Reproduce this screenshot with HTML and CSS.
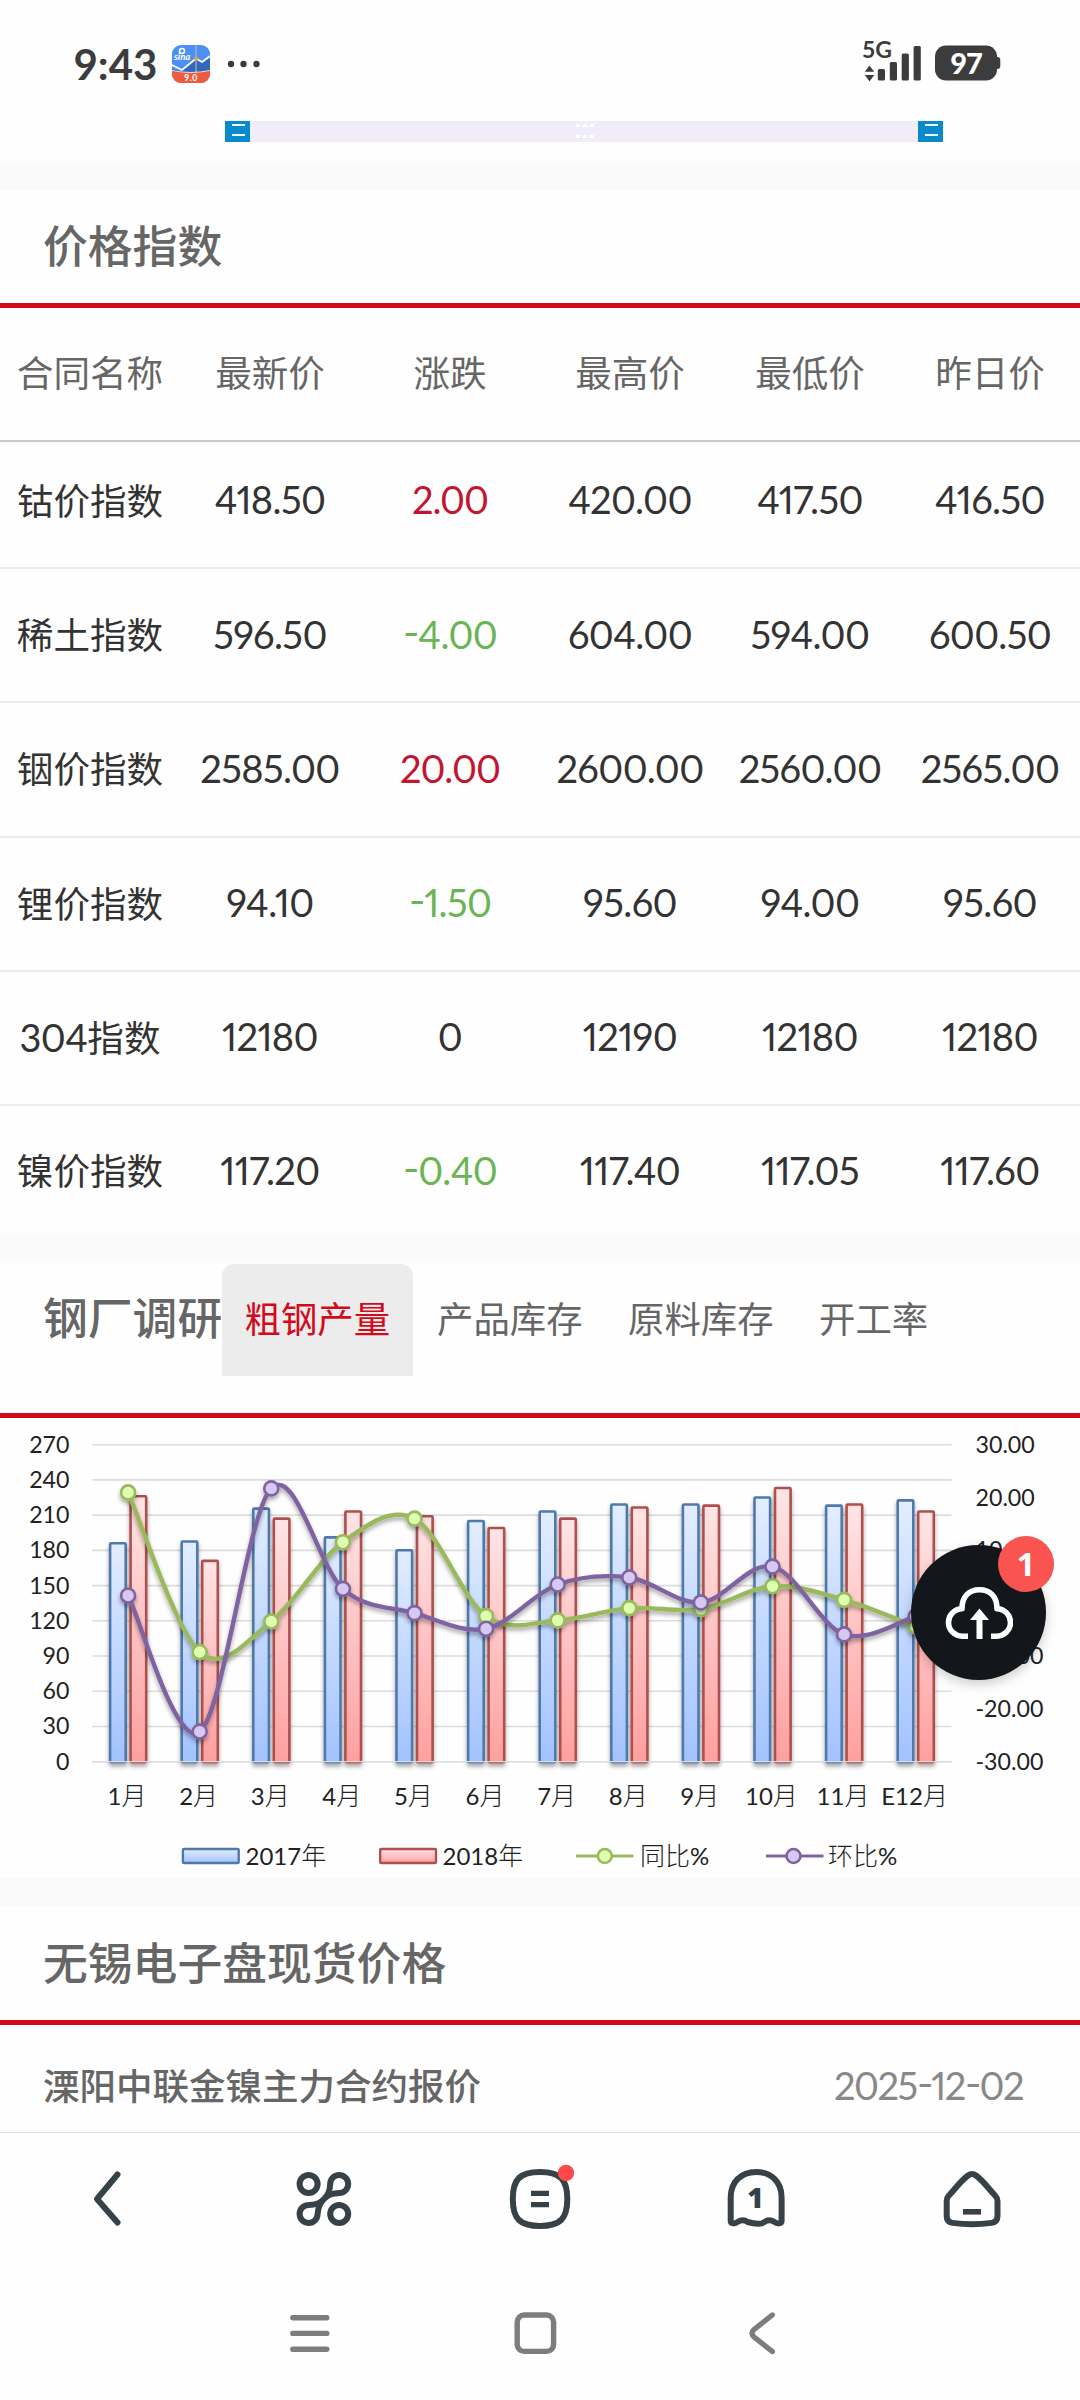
FILE: index.html
```html
<!DOCTYPE html>
<html lang="zh-CN">
<head>
<meta charset="utf-8">
<title>价格指数</title>
<link rel="stylesheet" href="styles.css">
</head>
<body>
<div class="screen">
  <header class="status">
    <span class="clock">9:43</span>
    <svg class="app-icon" width="38" height="38" viewBox="0 0 38 38">
      <defs><clipPath id="appClip"><rect width="38" height="38" rx="9"/></clipPath></defs>
      <g clip-path="url(#appClip)">
        <rect width="38" height="38" fill="#4d8ff5"/>
        <path d="M0 24L9 26L24 14L31 18L38 12V30H0z" fill="#3568bd"/>
        <path d="M0 20L10 25L24 13.500L30 17L38 11" fill="none" stroke="#fff" stroke-width="1.800"/>
        <path d="M24 0V28" stroke="#c9bfa6" stroke-width="1"/>
        <circle cx="24" cy="13.500" r="1.900" fill="#e0a14c"/>
        <path d="M0 26Q19 30 38 26V38H0z" fill="#ef5b3c"/>
        <path d="M0 25.500Q19 29.500 38 25.500" fill="none" stroke="#f7d9cf" stroke-width="1"/>
        <circle cx="10" cy="6" r="2.500" fill="none" stroke="#fff" stroke-width="1.500"/>
      </g>
      <text x="2" y="14.500" class="app-brand">sina</text>
      <text x="19" y="36" class="app-version">9.0</text>
    </svg>
    <svg class="more" width="34" height="8" viewBox="0 0 34 8"><g fill="#3c3c3c"><circle cx="4" cy="4" r="3.200"/><circle cx="16.500" cy="4" r="3.200"/><circle cx="29.500" cy="4" r="3.200"/></g></svg>
    <svg class="signal" width="140" height="66" viewBox="862 28 140 66">
      <text x="862" y="57.500" class="net">5G</text>
      <g fill="#3c3c3c">
        <path d="M869.500 65.500L874.200 71.800H864.800zM864.800 75H874.200L869.500 81.500z"/>
        <rect x="877.800" y="69" width="7.200" height="11.500" rx="1.500"/><rect x="889.800" y="62" width="7.200" height="18.500" rx="1.500"/><rect x="901.700" y="53.500" width="7.200" height="27" rx="1.500"/><rect x="913.600" y="46" width="7.200" height="34.500" rx="1.500"/>
        <rect x="935" y="45.500" width="62" height="35" rx="11"/><rect x="990" y="57" width="10.300" height="12" rx="3"/>
      </g>
      <text x="966" y="73.500" class="battery">97</text>
    </svg>
  </header>

  <div class="slider">
    <span class="handle"></span>
    <span class="track"><i></i><i></i><i></i><i></i><i></i><i></i></span>
    <span class="handle"></span>
  </div>

  <section class="card index">
    <h2 class="bar">价格指数</h2>
    <div class="table">
      <div class="tr th"><span>合同名称</span><span>最新价</span><span>涨跌</span><span>最高价</span><span>最低价</span><span>昨日价</span></div>
      <div class="tr first"><span>钴价指数</span><b>418.50</b><b class="up">2.00</b><b>420.00</b><b>417.50</b><b>416.50</b></div>
      <div class="tr"><span>稀土指数</span><b>596.50</b><b class="down"><u>-</u>4.00</b><b>604.00</b><b>594.00</b><b>600.50</b></div>
      <div class="tr"><span>铟价指数</span><b>2585.00</b><b class="up">20.00</b><b>2600.00</b><b>2560.00</b><b>2565.00</b></div>
      <div class="tr"><span>锂价指数</span><b>94.10</b><b class="down"><u>-</u>1.50</b><b>95.60</b><b>94.00</b><b>95.60</b></div>
      <div class="tr"><span><b>304</b>指数</span><b>12180</b><b>0</b><b>12190</b><b>12180</b><b>12180</b></div>
      <div class="tr last"><span>镍价指数</span><b>117.20</b><b class="down"><u>-</u>0.40</b><b>117.40</b><b>117.05</b><b>117.60</b></div>
    </div>
  </section>

  <section class="card survey">
    <div class="bar tabs">
      <h2>钢厂调研</h2>
      <span class="tab active">粗钢产量</span><span class="tab">产品库存</span><span class="tab">原料库存</span><span class="tab">开工率</span>
    </div>
    <svg id="chart" class="chart" width="1080" height="460" viewBox="0 1418 1080 460">
      <defs>
        <linearGradient id="blue" x1="0" y1="0" x2="0" y2="1"><stop offset="0" stop-color="#e2edff"/><stop offset="1" stop-color="#a2c2ff"/></linearGradient>
        <linearGradient id="red" x1="0" y1="0" x2="0" y2="1"><stop offset="0" stop-color="#ffe5e5"/><stop offset="1" stop-color="#ff9f9f"/></linearGradient>
        <filter id="shadow" x="-20%" y="-20%" width="140%" height="140%"><feDropShadow dx="0" dy="3" stdDeviation="2" flood-color="#000" flood-opacity=".35"/></filter>
      </defs>
    </svg>
    <div class="fab">
      <svg width="68" height="56" viewBox="944 1584 68 56">
        <path d="M967 1635.200H961.500A13.700 13.700 0 0 1 961 1607.700C961 1595.500 968 1588.700 978.500 1588.700S996 1595.500 996 1607.700A13.700 13.700 0 0 1 995.500 1635.200H990" fill="none" stroke="#fff" stroke-width="5.600" stroke-linejoin="round"/>
        <path d="M978.500 1607.500L988 1619H981.500V1638H975.500V1619H969z" fill="#fff"/>
      </svg>
      <span class="badge">1</span>
    </div>
  </section>

  <section class="card spot">
    <h2 class="bar">无锡电子盘现货价格</h2>
    <div class="news"><span>溧阳中联金镍主力合约报价</span><time>2025<u>-</u>12<u>-</u>02</time></div>
  </section>

  <nav class="tools">
    <span><svg width="70" height="70" viewBox="73 2164 70 70"><path d="M117.500 2174.500L97 2199L117.500 2222.500" class="ic"/></svg></span>
    <span><svg width="70" height="70" viewBox="289 2164 70 70"><g class="ic"><circle cx="308.600" cy="2184" r="9"/><circle cx="339.200" cy="2214" r="9"/><path d="M324 2199C329 2194 333 2193.300 339.500 2193A9 9 0 1 0 330.200 2184C329.800 2190 329 2194 324 2199C319 2204 315 2204.700 308.500 2205A9 9 0 1 0 317.600 2214C318 2208 319 2204 324 2199z"/></g></svg></span>
    <span><svg width="70" height="70" viewBox="505 2164 70 70"><path d="M540 2172C560 2172 567.300 2179 567.300 2199S560 2226 540 2226S512.800 2219 512.800 2199S520 2172 540 2172z" class="ic"/><path d="M531 2193.400H549M531 2204.600H549" fill="none" stroke="#374248" stroke-width="5.400"/><circle cx="566" cy="2173" r="8.200" fill="#ff4848"/></svg></span>
    <span><svg width="70" height="70" viewBox="721 2164 70 70"><path d="M730.700 2221V2197.500C730.700 2182 741 2172 756.100 2172S781.600 2182 781.600 2197.500V2221C781.600 2224 777 2224 774.500 2222Q769 2218.500 764.500 2222T747.500 2222Q743 2218.500 737.500 2222C735 2224 730.700 2224 730.700 2221z" class="ic"/><text x="755.500" y="2208" class="page-count">1</text></svg></span>
    <span><svg width="70" height="70" viewBox="937 2164 70 70"><path d="M946.700 2201Q946.700 2198 948.500 2196C957 2187 960 2181.500 968 2175.500Q972 2172.500 976 2175.500C984 2181.500 987 2187 995.500 2196Q997.500 2198 997.500 2201V2216Q997.500 2222 991.500 2222.900Q972 2225.500 952.500 2222.900Q946.700 2222 946.700 2216z" class="ic"/><path d="M963 2211.800H981" fill="none" stroke="#374248" stroke-width="5.600"/></svg></span>
  </nav>
  <footer class="sysnav">
    <svg width="44" height="48" viewBox="288 2309 44 48"><path d="M292.800 2317.700H326.800M292.800 2333.400H326.800M292.800 2349.200H326.800"/></svg>
    <svg width="48" height="48" viewBox="511 2309 48 48"><rect x="517.200" y="2315" width="36.400" height="36.400" rx="7"/></svg>
    <svg width="32" height="48" viewBox="746 2309 32 48"><path d="M772.300 2315L754 2329.500Q750 2333.300 754 2337L772.300 2351.500"/></svg>
  </footer>
</div>
<script src="chart.js"></script>
</body>
</html>
```
FILE: styles.css
```css
* { box-sizing: border-box; margin: 0; padding: 0; }
body {
  width: 1080px;
  background: #fefefe;
  font-family: Lato, "Noto Sans CJK SC", sans-serif;
  color: #333;
}
.screen { width: 1080px; height: 2400px; display: flex; flex-direction: column; overflow: hidden; }
svg { display: block; }
i, u { font-style: normal; text-decoration: none; }

.status { height: 121px; padding: 6px 78px 0 73.5px; display: flex; align-items: center; }
.clock { font: 700 42px/1 Lato, sans-serif; letter-spacing: 0; width: 98.5px; color: #3c3c3c; }
.more { margin-left: 17px; }
.signal { margin-left: auto; margin-top: -5px; }
.app-brand { font: italic 700 9.5px Lato, sans-serif; fill: #fff; }
.app-version { font: 700 8.5px Lato, sans-serif; letter-spacing: .6px; fill: #fff; text-anchor: middle; }
.net { font: 700 23px Lato, sans-serif; fill: #3c3c3c; }
.battery { font: 900 29px Lato, sans-serif; letter-spacing: -1px; fill: #fff; text-anchor: middle; }

.slider { height: 40px; padding-left: 225px; display: flex; }
.handle { width: 25px; height: 21px; background: #0a89cc; padding: 3px 5px 0 7px; }
.handle::before { content: ""; display: block; height: 8px; border: solid #e9fbff; border-width: 2px 0; }
.track { width: 668px; height: 21px; background: #f0ecf9; display: grid; grid-template-columns: repeat(3, 4px); gap: 8px 3px; justify-content: center; align-content: start; padding: 3px 0 0 2px; }
.track i { width: 4px; height: 3px; background: #fff; }

.card { position: relative; border-top: 29px solid #fafafa; }
h2, .bar { font-size: 44.8px; font-weight: 500; color: #666; }
.bar { border-bottom: 5px solid #d20a1a; padding-left: 43px; line-height: 113px; }
.index .bar { height: 118px; }

.tr { height: 134.25px; border-bottom: 2px solid #ececec; display: grid; grid-template-columns: repeat(6, 180px); align-items: center; text-align: center; font-size: 36.6px; padding-bottom: 3px; }
.tr.th { height: 134px; border-color: #c8c8c8; color: #666; padding-bottom: 5px; }
.tr.first { height: 127px; padding-bottom: 11px; }
.tr.last { height: 127px; border: 0; padding-bottom: 0; }
.tr b, time { font-weight: 400; font-size: 38px; letter-spacing: -.6px; font-feature-settings: "pnum"; }
.tr .up { color: #c4152f; letter-spacing: -1px; }
.tr .down { color: #6ab553; }
.tr u, time u { display: inline-block; transform: translateY(-3px) scaleX(1.2); margin: 0 1px; }

.tabs { height: 157px; display: flex; align-items: flex-start; padding-top: 3px; }
.tabs h2 { width: 179px; white-space: nowrap; line-height: 109px; }
.tab { width: 191px; height: 112px; padding-left: 24px; font-size: 36.4px; font-weight: 400; line-height: 111px; white-space: nowrap; }
.tab.active { background: #ececec; color: #d20a1a; border-radius: 12px 12px 0 0; padding-left: 22.5px; }

.chart text { font: 400 23.2px Lato, "Noto Sans CJK SC", sans-serif; fill: #222; }
.chart .cjk { font-size: 24px; }
.chart .han { font-weight: 300; font-size: 25px; }
.fab { position: absolute; left: 911px; top: 284px; width: 135px; height: 135px; border-radius: 50%; background: #13171b; box-shadow: 0 4px 12px rgba(0, 0, 0, .2); display: flex; align-items: center; justify-content: center; }
.badge { position: absolute; left: 87px; top: -9px; width: 56px; height: 56px; border-radius: 50%; background: #f9544f; color: #fff; font: 700 33px/55px "Noto Sans", sans-serif; text-align: center; }

.card.survey, .card.spot { border-top-width: 28px; }
.spot .bar { height: 119px; line-height: 115px; }
.news { height: 108px; border-bottom: 1px solid #ddd; padding: 12px 57px 0 43px; display: flex; justify-content: space-between; align-items: center; color: #666; font-size: 36.5px; font-weight: 500; }
time { color: #888; }
.news time { letter-spacing: -1.5px; }

.tools { height: 132px; display: grid; grid-template-columns: repeat(5, 216px); justify-items: center; align-items: center; }
.ic { fill: none; stroke: #374248; stroke-width: 6; stroke-linecap: round; stroke-linejoin: round; }
.page-count { font: 800 28px "Open Sans", sans-serif; fill: #374248; text-anchor: middle; }
.sysnav { height: 135px; padding: 44px 302px 0 288px; display: flex; }
.sysnav svg { fill: none; stroke: #7d7d7d; stroke-width: 5.4; stroke-linecap: round; stroke-linejoin: round; }
.sysnav svg:nth-child(2) { margin-left: 179px; }
.sysnav svg:nth-child(3) { margin-left: auto; }
```
FILE: chart.js
```js
const svg = document.getElementById('chart');
const NS = 'http://www.w3.org/2000/svg';
const X0 = 92.3, STEP = 71.6, TOP = 1444.7, BASE = 1761.7;

function add(tag, attrs, text, parent) {
  const el = document.createElementNS(NS, tag);
  for (const k in attrs) el.setAttribute(k, attrs[k]);
  if (text) el.textContent = text;
  (parent || svg).appendChild(el);
  return el;
}
// digits stay regular, Han characters are set light
function label(attrs, text) {
  const el = add('text', attrs);
  text.split(/([\u4e00-\u9fff]+)/).filter(Boolean).forEach(s =>
    add('tspan', /[\u4e00-\u9fff]/.test(s) ? { class: 'han' } : {}, s, el));
}
const valueY = v => BASE - v * (BASE - TOP) / 270;
const rateY = v => (TOP + BASE) / 2 - v * (BASE - TOP) / 60;

// left axis and grid
for (let v = 0; v <= 270; v += 30) {
  add('line', { x1: X0, x2: 951.5, y1: valueY(v), y2: valueY(v), stroke: '#dcdcdc', 'stroke-width': 1.6 });
  add('text', { x: 69.5, y: valueY(v) + 8, 'text-anchor': 'end' }, String(v));
}
// right axis
for (let v = 30; v >= -30; v -= 10) {
  add('text', { x: 975.5, y: rateY(v) + 8 }, v.toFixed(2));
}

// monthly output
const y2017 = [186.5, 188, 216, 191.5, 180.5, 205.5, 213.5, 219.5, 219.5, 225.5, 218.5, 223];
const y2018 = [226.5, 171.5, 207.5, 213.5, 209.5, 199.5, 207.5, 217, 218.5, 233.5, 219.5, 213.5];
const bars = add('g', { filter: 'url(#shadow)' });
function bar(x, v, fill, stroke) {
  const y = valueY(v) + 0.5;
  add('rect', { x, y, width: 15.6, height: BASE + 0.5 - y, rx: 1, fill: `url(#${fill})`, stroke, 'stroke-width': 2.6 }, '', bars);
}
y2017.forEach((v, i) => {
  bar(110.1 + i * STEP, v, 'blue', '#5079ab');
  bar(130.6 + i * STEP, y2018[i], 'red', '#ae504e');
});
add('line', { x1: X0, x2: 951.5, y1: BASE, y2: BASE, stroke: '#dcdcdc', 'stroke-width': 1.2 });

// growth rates
const yoy = [20.97, -9.24, -3.45, 11.53, 16, -2.45, -3.25, -0.93, -1.12, 3.22, 0.63, -4.4];
const mom = [1.45, -24.3, 21.73, 2.72, -1.88, -4.84, 3.53, 4.86, 0.13, 6.93, -5.91, -2.5];
const dist = (a, b) => Math.hypot(a[0] - b[0], a[1] - b[1]);
function smooth(p) {
  let d = `M${p[0]}`;
  for (let i = 0; i < p.length - 1; i++) {
    const a = p[i - 1] || p[i], b = p[i], c = p[i + 1], e = p[i + 2] || c;
    const half = dist(b, c) / 2;
    const f = Math.min(1 / 6, half / dist(a, c)), g = Math.min(1 / 6, half / dist(b, e));
    d += `C${b[0] + (c[0] - a[0]) * f},${b[1] + (c[1] - a[1]) * f} ${c[0] - (e[0] - b[0]) * g},${c[1] - (e[1] - b[1]) * g} ${c}`;
  }
  return d;
}
function marker(parent, x, y, fill, stroke) {
  add('circle', { cx: x, cy: y, r: 7, fill, stroke, 'stroke-width': 2.6 }, '', parent);
}
function series(data, stroke, fill) {
  const g = add('g', { filter: 'url(#shadow)' });
  const pts = data.map((v, i) => [128.1 + i * STEP, rateY(v)]);
  add('path', { d: smooth(pts), fill: 'none', stroke, 'stroke-width': 4.4 }, '', g);
  pts.forEach(p => marker(g, p[0], p[1], fill, stroke));
}
series(yoy, '#9ab95c', '#dcffb0');
series(mom, '#7f64a0', '#d6c8f0');

// month labels
['1月', '2月', '3月', '4月', '5月', '6月', '7月', '8月', '9月', '10月', '11月', 'E12月'].forEach((t, i) =>
  label({ x: 127 + i * STEP, y: 1804.7, 'text-anchor': 'middle', class: 'cjk' }, t));

// legend
add('rect', { x: 182.9, y: 1849, width: 55.8, height: 14, rx: 1, fill: 'url(#blue)', stroke: '#5079ab', 'stroke-width': 2.4 });
add('rect', { x: 380.2, y: 1849, width: 55.8, height: 14, rx: 1, fill: 'url(#red)', stroke: '#ae504e', 'stroke-width': 2.4 });
add('path', { d: 'M576 1856H633.5', stroke: '#9ab95c', 'stroke-width': 3 });
marker(svg, 604.8, 1856, '#dcffb0', '#9ab95c');
add('path', { d: 'M766 1856H823.5', stroke: '#7f64a0', 'stroke-width': 3 });
marker(svg, 793.5, 1856, '#d6c8f0', '#7f64a0');
[[245.5, '2017年'], [442.5, '2018年'], [640, '同比%'], [828, '环比%']].forEach(([x, t]) =>
  label({ x, y: 1864.5, class: 'cjk' }, t));
```
